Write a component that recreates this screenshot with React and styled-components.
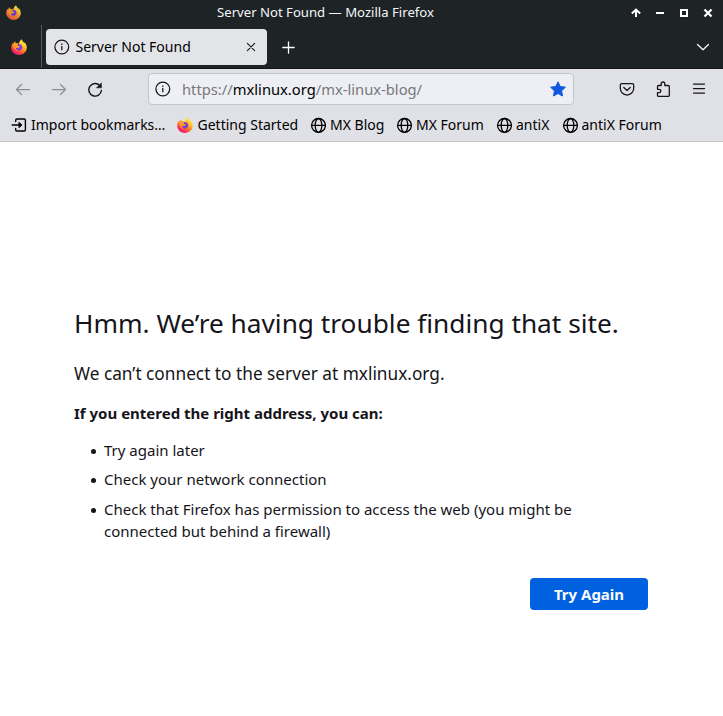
import React from "react";
import styled, { createGlobalStyle } from "styled-components";

const Global = createGlobalStyle`
  * { box-sizing: border-box; }
  html, body { margin: 0; background: #fff; }
  body { font-family: "Noto Sans", sans-serif; color: #15141a; overflow: hidden; }
  svg { display: block; flex: none; }
`;

const Window = styled.div`
  width: 723px;
  height: 716px;
  display: flex;
  flex-direction: column;
`;

const TitleBar = styled.header`
  height: 25px;
  display: grid;
  grid-template-columns: 100px 1fr 100px;
  align-items: center;
  padding-left: 6px;
  background: #1e2326;
  color: #f3f6f8;
`;

const WindowTitle = styled.div`
  text-align: center;
  font-size: 13.15px;
  line-height: 18px;
  white-space: nowrap;
  margin: -2px 78px 0 0;
`;

const WindowControls = styled.div`
  display: flex;
  justify-content: flex-end;
  gap: 12px;
  padding-right: 9px;
`;

const TabStrip = styled.div`
  height: 44px;
  display: flex;
  background: #1e2326;
  border-bottom: 1px solid #131618;
  color: #fbfbfe;
`;

const PinnedTab = styled.div`
  width: 42px;
  padding: 14px 0 0 11px;
  border-right: 1px solid #54585a;
`;

const Tab = styled.div`
  width: 221px;
  height: 36px;
  margin: 4px 0 0 4px;
  padding: 0 11px 0 8px;
  display: flex;
  align-items: center;
  background: #e3e4e8;
  border-radius: 4px;
  color: #15141a;
`;

const TabLabel = styled.span`
  flex: 1;
  margin: -1px 0 0 5.5px;
  font-size: 14px;
  line-height: 20px;
  color: #000;
  white-space: nowrap;
`;

const NewTab = styled.div`
  flex: 1;
  padding: 16px 0 0 15px;
`;

const AllTabs = styled.div`
  padding: 14px 12px 0 0;
`;

const NavBar = styled.nav`
  height: 40px;
  display: flex;
  align-items: center;
  background: #e0e1e6;
`;

const NavButtons = styled.div`
  width: 148px;
  display: flex;
  gap: 20px;
  padding-left: 15px;
`;

const UrlBar = styled.div`
  width: 426px;
  height: 32px;
  display: flex;
  align-items: center;
  padding: 0 6px;
  background: #eeeff4;
  border: 1px solid #c5c6ca;
  border-radius: 4px;
`;

const Url = styled.div`
  flex: 1;
  margin-left: 11px;
  font-size: 14.73px;
  line-height: 20px;
  color: #76777b;
  white-space: nowrap;
`;

const Host = styled.span`
  color: #000;
`;

const NavTools = styled.div`
  flex: 1;
  display: flex;
  justify-content: flex-end;
  gap: 20px;
  padding-right: 16px;
`;

const BookmarkBar = styled.div`
  height: 33px;
  display: flex;
  padding: 0 0 0 11px;
  background: #e0e1e6;
  border-bottom: 1px solid #c5c6ca;
`;

const Bookmark = styled.div`
  width: ${(p) => p.$width}px;
  display: flex;
  align-items: center;
  gap: ${(p) => p.$gap ?? 4}px;
  font-size: 14px;
  line-height: 20px;
  color: #000;
  white-space: nowrap;
`;

const BookmarkLabel = styled.span`
  margin-top: -1px;
`;

const Page = styled.main`
  flex: 1;
  display: flex;
  flex-direction: column;
  padding: 162px 75px 0 74px;
  background: #fff;
`;

const Heading = styled.h1`
  margin: 0;
  font-size: 26.25px;
  font-weight: 400;
  line-height: 38px;
  white-space: nowrap;
`;

const Lead = styled.p`
  margin: 19px 0 0;
  font-size: 17.25px;
  line-height: 26px;
`;

const Advice = styled.p`
  margin: 15px 0 0;
  font-size: 15px;
  font-weight: 700;
  line-height: 22px;
`;

const List = styled.ul`
  display: grid;
  margin: 15px 0 0;
  padding: 0 30px 0 17px;
  list-style: none;
  font-size: 15px;
  line-height: 22px;
`;

const Item = styled.li`
  display: grid;
  grid-template-columns: 13px 1fr;
  margin-bottom: 7px;

  &:nth-child(2) { margin-bottom: 8px; }

  &::before {
    content: "";
    width: 5px;
    height: 5px;
    margin-top: 10px;
    border-radius: 50%;
    background: #15141a;
  }
`;

const RetryButton = styled.button`
  align-self: flex-end;
  width: 118px;
  height: 32px;
  margin-top: 29px;
  padding: 0;
  border: 0;
  border-radius: 4px;
  background: #0061e0;
  color: #fbfbfe;
  font: 700 15px/22px "Noto Sans", sans-serif;
`;

function FirefoxIcon({ size, id, dim }) {
  return (
    <svg width={size} height={size} viewBox="0 0 16 16" opacity={dim ? 0.92 : 1}>
      <defs>
        <linearGradient id={id} x1="13" y1="1" x2="4" y2="15" gradientUnits="userSpaceOnUse">
          <stop offset="0" stopColor="#fff44f" />
          <stop offset="0.32" stopColor="#ffc52b" />
          <stop offset="0.6" stopColor={dim ? "#fb8a35" : "#ff7a2b"} />
          <stop offset="0.85" stopColor={dim ? "#f36c35" : "#ff2f55"} />
          <stop offset="1" stopColor={dim ? "#e05a40" : "#e31587"} />
        </linearGradient>
      </defs>
      <path fill={`url(#${id})`} d="M10.8.2c.2 1.6 1.400 2.400 2.400 3.700l.6-.5c1.200 1.600 2 3.400 2 5.100 0 4.300-3.500 7.400-7.800 7.400S.2 12.800.2 8.400c0-1.900.7-3.500 1.700-4.500l.2 1.100C2.500 3.900 3.200 3 4.100 2.300c0 .8.3 1.500.8 2 .9-.2 1.900 0 2.700.4C8.200 2.900 9.200 1.200 10.800.2Z" />
      <path fill="#7a3fd8" d="M6.700 5.200c1.900-.8 4.600.5 4.600 3.100 0 2-1.600 3.200-3.300 3.200-1.900 0-3.200-1.300-3.200-2.800 1 .7 2.100.5 2.900-.1.600-.4 1-.6 1-.9 0-.4-.9-.4-1.500-.6-.7-.3-.9-1.100-.5-1.900Z" />
      <path fill="#ff9a2b" d="M2 5.200c1.300-1 3.200-1.200 5.100-.2-.5.3-.8.8-.6 1.500.3.7 2 .5 2 1.100 0 .4-.5.6-1.100 1-.8.6-1.800.6-2.600.1.100 1.800 1.300 2.700 2.600 3-3 .3-5.300-2.900-5.400-6.500Z" />
    </svg>
  );
}

const Line = ({ size = 16, color = "currentColor", width = 1.25, children, ...rest }) => (
  <svg width={size} height={size} viewBox="0 0 16 16" fill="none" stroke={color} strokeWidth={width} strokeLinecap="round" strokeLinejoin="round" {...rest}>
    {children}
  </svg>
);

const InfoIcon = () => (
  <Line>
    <circle cx="7.8" cy="8" r="6.9" />
    <path d="M7.8 7.100v4.200" strokeLinecap="butt" />
    <path d="M7.8 4.400v1.500" strokeLinecap="butt" />
  </Line>
);

const GlobeIcon = () => (
  <Line width={1.3}>
    <circle cx="8.5" cy="8.400" r="6.9" />
    <ellipse cx="8.5" cy="8.400" rx="3.3" ry="6.9" />
    <path d="M1.500 8.400h14" />
  </Line>
);

const ImportIcon = () => (
  <Line width={1.4}>
    <path d="M4.700 4.600V3.200c0-.7.5-1.200 1.200-1.200h7.300c.7 0 1.200.5 1.200 1.200v9.600c0 .7-.5 1.200-1.200 1.200H5.900c-.7 0-1.200-.5-1.200-1.200v-1.400" />
    <path d="M1.200 8h8.300" />
    <path d="M8.200 5.400 11 8l-2.800 2.600Z" fill="currentColor" strokeWidth="0.8" />
  </Line>
);

const bookmarks = [
  { label: "Import bookmarks…", width: 166, icon: <ImportIcon /> },
  { label: "Getting Started", width: 133, gap: 4.5, icon: <FirefoxIcon size={16} id="fox-bookmark" /> },
  { label: "MX Blog", width: 86, icon: <GlobeIcon /> },
  { label: "MX Forum", width: 100, icon: <GlobeIcon /> },
  { label: "antiX", width: 66, icon: <GlobeIcon /> },
  { label: "antiX Forum", width: 110, gap: 3.5, icon: <GlobeIcon /> },
];

export default function App() {
  return (
    <Window>
      <Global />
      <TitleBar>
        <FirefoxIcon size={15} id="fox-title" dim />
        <WindowTitle>Server Not Found — Mozilla Firefox</WindowTitle>
        <WindowControls>
          <svg width="12" height="12" viewBox="0 0 12 12" fill="none" stroke="#fff" strokeWidth="2"><path d="M6 10V3M1.800 6.600 6 2.700l4.200 3.900" /></svg>
          <svg width="12" height="12" viewBox="0 0 12 12" fill="#fff"><path d="M2 5h8v2H2z" /></svg>
          <svg width="12" height="12" viewBox="0 0 12 12" fill="none" stroke="#fff" strokeWidth="2"><path d="M3 3h6v6H3z" /></svg>
          <svg width="12" height="12" viewBox="0 0 12 12" fill="none" stroke="#fff" strokeWidth="2.2"><path d="m2.500 2.500 7 7m0-7-7 7" /></svg>
        </WindowControls>
      </TitleBar>

      <TabStrip>
        <PinnedTab><FirefoxIcon size={16} id="fox-pinned" /></PinnedTab>
        <Tab>
          <InfoIcon />
          <TabLabel>Server Not Found</TabLabel>
          <Line size={10} width={1.7}><path d="m2.200 2.200 11.600 11.600m0-11.600L2.200 13.800" /></Line>
        </Tab>
        <NewTab><Line size={13} width={1.6}><path d="M8 1v14M1 8h14" /></Line></NewTab>
        <AllTabs><Line><path d="m2.500 5.500 5.500 5.300 5.500-5.300" /></Line></AllTabs>
      </TabStrip>

      <NavBar>
        <NavButtons>
          <Line color="#8d8e92"><path d="M14.500 8.500h-13M6.500 3.500l-5 5 5 5" /></Line>
          <Line color="#8d8e92"><path d="M1.500 8.500h13M9.500 3.500l5 5-5 5" /></Line>
          <Line width={1.4}>
            <path d="M12.800 4.600A6.300 6.300 0 1 0 14.400 9.500" />
            <path d="M14.400 2.200v4.600H9.800Z" fill="currentColor" strokeWidth="0.6" />
          </Line>
        </NavButtons>
        <UrlBar>
          <InfoIcon />
          <Url>https://<Host>mxlinux.org</Host>/mx-linux-blog/</Url>
          <svg width="18" height="18" viewBox="0 0 18 18" fill="#1058df" stroke="#1058df" strokeLinejoin="round">
            <path d="m9 1.800 2.200 4.700 5.200.7-3.800 3.600.9 5.200L9 13.500 4.500 16l.9-5.200L1.600 7.200l5.200-.7Z" />
          </svg>
        </UrlBar>
        <NavTools>
          <Line><path d="M2.700 2.500h10.600c.8 0 1.400.6 1.400 1.400v3.400a6.700 6.700 0 0 1-13.400 0V3.900c0-.8.6-1.400 1.400-1.400Z" /><path d="m4.800 6.500 3.200 3 3.200-3" /></Line>
          <Line width={1.3}><path d="M2.500 6.300V5.500c0-.6.4-1 1-1h2.700V3c0-1.200.8-2 1.800-2s1.800.8 1.800 2v1.500h3.500c.6 0 1 .4 1 1v9c0 .5-.3.8-.8.8H3.300c-.5 0-.8-.3-.8-.8v-2.800h1.400c1.200 0 1.900-.8 1.900-1.700s-.7-1.700-1.900-1.700H2.500Z" /></Line>
          <Line><path d="M2.500 3h11M2.500 7.500h11M2.500 12h11" /></Line>
        </NavTools>
      </NavBar>

      <BookmarkBar>
        {bookmarks.map((b) => (
          <Bookmark key={b.label} $width={b.width} $gap={b.gap}>
            {b.icon}
            <BookmarkLabel>{b.label}</BookmarkLabel>
          </Bookmark>
        ))}
      </BookmarkBar>

      <Page>
        <Heading>Hmm. We’re having trouble finding that site.</Heading>
        <Lead>We can’t connect to the server at mxlinux.org.</Lead>
        <Advice>If you entered the right address, you can:</Advice>
        <List>
          <Item>Try again later</Item>
          <Item>Check your network connection</Item>
          <Item>Check that Firefox has permission to access the web (you might be connected but behind a firewall)</Item>
        </List>
        <RetryButton>Try Again</RetryButton>
      </Page>
    </Window>
  );
}
